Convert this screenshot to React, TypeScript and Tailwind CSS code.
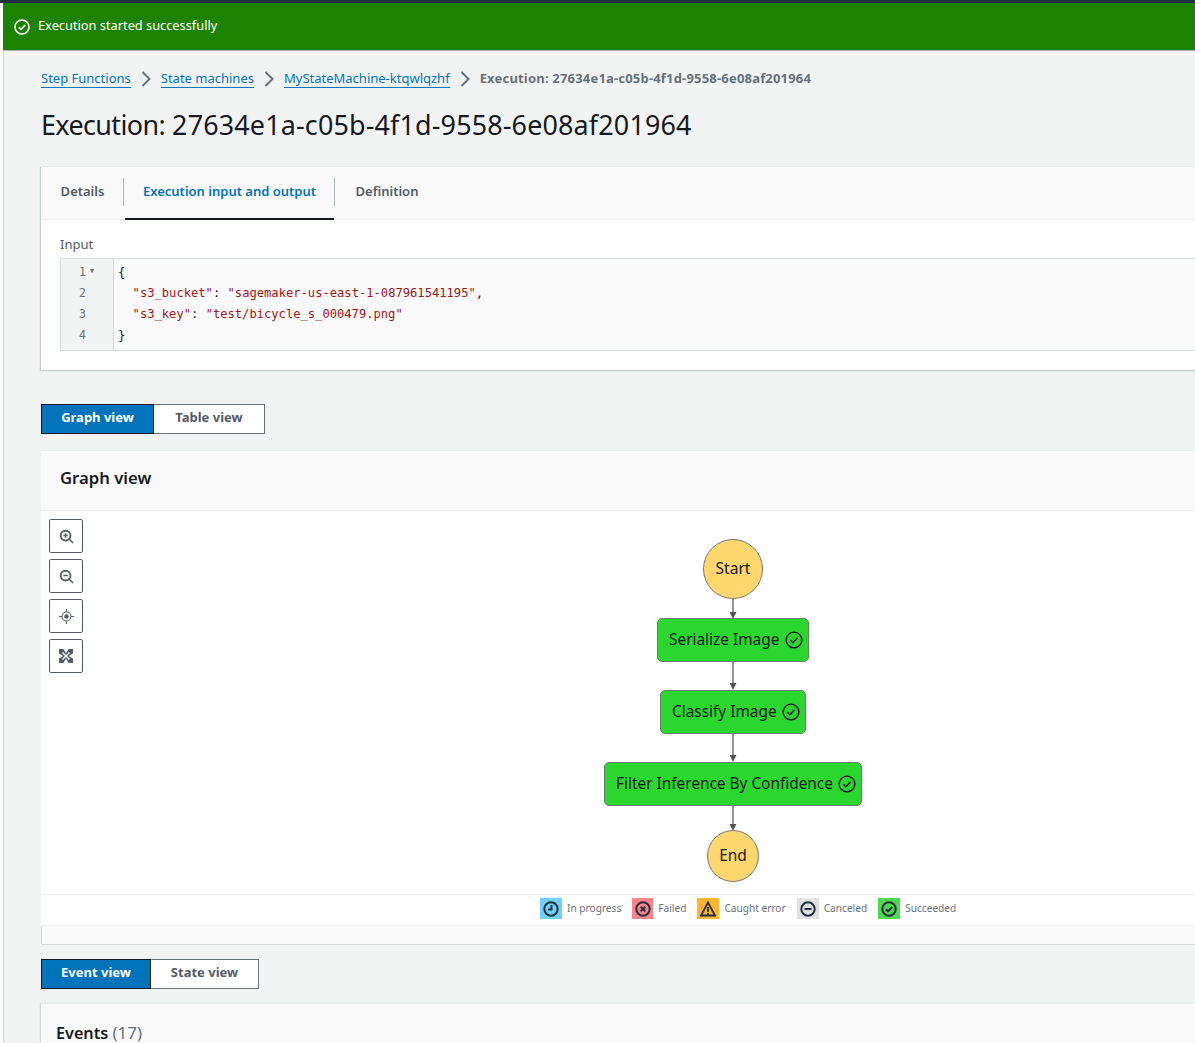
import type { ReactNode } from 'react';

const font = { fontFamily: '"Noto Sans", sans-serif' };

function CheckCircle({ className, strokeWidth = 1.3 }: { className: string; strokeWidth?: number }) {
  return (
    <svg viewBox="0 0 16 16" fill="none" stroke="currentColor" strokeWidth={strokeWidth} className={className}>
      <circle cx="8" cy="8" r="7" />
      <path d="M4.8 8.2l2.2 2.2 4.2-4.4" />
    </svg>
  );
}

function Chevron() {
  return (
    <svg viewBox="0 0 12 16" fill="none" stroke="#687078" strokeWidth="2" className="w-[12px] h-[16px] mx-[9px]">
      <path d="M2.5 1l7 7-7 7" />
    </svg>
  );
}

function Crumb({ label }: { label: string }) {
  return <a className="text-[13px] leading-[17px] text-[#0073bb] border-b border-[#0073bb]">{label}</a>;
}

function Toggle({ on, off, onWidth, offWidth }: { on: string; off: string; onWidth: string; offWidth: string }) {
  return (
    <div className="flex h-[30px] text-[13px] font-bold">
      <div className={`${onWidth} flex items-center justify-center pb-[2px] bg-[#0073bb] border border-[#16191f] text-white`}>{on}</div>
      <div className={`${offWidth} flex items-center justify-center pb-[2px] bg-white border border-l-0 border-[#687078] text-[#545b64]`}>{off}</div>
    </div>
  );
}

function ToolButton({ children }: { children: ReactNode }) {
  return (
    <div className="w-[34px] h-[34px] flex items-center justify-center bg-white border border-[#545b64] rounded-[2px] text-[#545b64]">
      {children}
    </div>
  );
}

function Arrow({ top, height }: { top: number; height: number }) {
  return (
    <svg className="absolute left-[686px]" style={{ top, height }} width="12" viewBox={`0 0 12 ${height}`}>
      <path d={`M6 0V${height - 6}`} stroke="#666" strokeWidth="1.4" />
      <path d={`M2.5 ${height - 7}h7L6 ${height}z`} fill="#555" />
    </svg>
  );
}

function TaskNode({ label, left, top, width }: { label: string; left: string; top: string; width: string }) {
  return (
    <div className={`absolute ${left} ${top} ${width} h-[44px] flex items-center justify-between pl-[11px] pr-[5px] bg-[#2bd62f] border border-[#6b7b6b] rounded-[5px] text-[15.4px] text-[#16191f]`}>
      <span className="whitespace-nowrap">{label}</span>
      <CheckCircle className="w-[18px] h-[18px] shrink-0 mb-[1px]" />
    </div>
  );
}

function Legend({ bg, width, label, children }: { bg: string; width: string; label: string; children: ReactNode }) {
  return (
    <div className="flex items-center gap-[5px]">
      <div className={`${width} h-[21px] flex items-center justify-center ${bg} text-[#232f3e]`}>{children}</div>
      <span className="text-[10.15px] text-[#687078]">{label}</span>
    </div>
  );
}

export default function App() {
  return (
    <div style={font} className="w-[1195px] h-[1043px] overflow-hidden bg-[#f2f3f3] text-[#16191f]">
      <div className="h-[3px] bg-[#232f3e]" />
      <div className="flex h-[1040px]">
        <div className="w-[3px] shrink-0 bg-white" />
        <div className="w-[1192px] shrink-0">
          <div className="h-[48px] flex items-center gap-[8px] pl-[11px] bg-[#1d8102] text-white text-[12.8px] border-b border-[#aab7b8]">
            <CheckCircle className="w-[16px] h-[16px]" strokeWidth={1.6} />
            <span className="mb-[1px]">Execution started successfully</span>
          </div>

          <div className="pl-[37px] w-[1540px] h-[992px] border-l border-[#d5dbdb]">
            <div className="flex items-center h-[17px] pt-[19px] box-content">
              <Crumb label="Step Functions" />
              <Chevron />
              <Crumb label="State machines" />
              <Chevron />
              <Crumb label="MyStateMachine-ktqwlqzhf" />
              <Chevron />
              <span className="text-[13px] font-bold tracking-[0.19px] text-[#687078]">Execution: 27634e1a-c05b-4f1d-9558-6e08af201964</span>
            </div>
            <h1 className="text-[26.9px] leading-[36px] mt-[20px] font-normal">
              <span className="tracking-[-0.6px]">Execution:</span> <span className="tracking-[0.17px]">27634e1a-c05b-4f1d-9558-6e08af201964</span>
            </h1>

            <section className="mt-[23px] h-[204px] bg-white border-t border-[#eaeded] shadow-[-1px_1px_1px_#c4cccc]">
              <div className="h-[53px] flex bg-[#fafafa] border-b border-[#eaeded] text-[13px] font-semibold text-[#545b64]">
                <div className="w-[82px] flex items-center justify-center pl-[1px] pb-[2px]">Details</div>
                <div className="w-px h-[28px] mt-[11px] bg-[#aab7b8]" />
                <div className="w-[209px] ml-[1px] flex items-center justify-center pb-[1px] text-[#0073bb] border-b-2 border-[#16191f] h-[53px]">Execution input and output</div>
                <div className="w-px h-[28px] mt-[11px] bg-[#aab7b8]" />
                <div className="w-[104px] flex items-center justify-center pb-[2px]">Definition</div>
              </div>
              <div className="pl-[19px] pt-[15px]">
                <div className="text-[13px] leading-[18px] text-[#545b64]">Input</div>
                <div className="mt-[5px] h-[93px] flex bg-[#fafafa] border border-[#d5dbdb] text-[11.5px] leading-[21px]" style={{ fontFamily: '"DejaVu Sans Mono", monospace' }}>
                  <div className="w-[53px] bg-[#f2f3f3] border-r border-[#d5dbdb] text-[#687078] pl-[18px] pt-[3px]">
                    <div className="relative">1<span className="absolute left-[11px] top-[-1px] text-[7px]">▼</span></div>
                    <div>2</div>
                    <div>3</div>
                    <div>4</div>
                  </div>
                  <div className="pl-[4px] pt-[3px] text-[12.13px] whitespace-pre text-[#16191f]">
                    <div>{'{'}</div>
                    <div>  <span className="text-[#a31515]">"s3_bucket"</span>: <span className="text-[#a31515]">"sagemaker-us-east-1-087961541195"</span>,</div>
                    <div>  <span className="text-[#a31515]">"s3_key"</span>: <span className="text-[#a31515]">"test/bicycle_s_000479.png"</span></div>
                    <div>{'}'}</div>
                  </div>
                </div>
              </div>
            </section>

            <div className="mt-[34px]">
              <Toggle on="Graph view" off="Table view" onWidth="w-[113px]" offWidth="w-[111px]" />
            </div>

            <section className="mt-[16px]">
              <div className="h-[61px] flex items-center pl-[19px] pb-[6px] bg-[#fafafa] border-t border-b border-[#eaeded] text-[16.7px] font-semibold">Graph view</div>
              <div className="relative h-[383px] bg-white">
                <div className="absolute left-[8px] top-[8px] flex flex-col gap-[6px]">
                  <ToolButton>
                    <svg viewBox="0 0 16 16" fill="none" stroke="currentColor" strokeWidth="2" className="w-[15px] h-[15px]">
                      <circle cx="7" cy="7" r="5.2" /><path d="M11 11l4 4M4.6 7h4.8M7 4.6v4.8" strokeWidth="1.6" />
                    </svg>
                  </ToolButton>
                  <ToolButton>
                    <svg viewBox="0 0 16 16" fill="none" stroke="currentColor" strokeWidth="2" className="w-[15px] h-[15px]">
                      <circle cx="7" cy="7" r="5.2" /><path d="M11 11l4 4M4.6 7h4.8" strokeWidth="1.6" />
                    </svg>
                  </ToolButton>
                  <ToolButton>
                    <svg viewBox="0 0 16 16" fill="none" stroke="currentColor" strokeWidth="1.2" className="w-[15px] h-[15px]">
                      <circle cx="8" cy="8" r="4.8" /><circle cx="8" cy="8" r="2.4" fill="currentColor" stroke="none" /><path d="M8 0v3M8 13v3M0 8h3M13 8h3" />
                    </svg>
                  </ToolButton>
                  <ToolButton>
                    <svg viewBox="0 0 14 14" className="w-[14px] h-[14px]">
                      <rect width="14" height="14" fill="currentColor" />
                      <path d="M3.5 3.5l7 7M10.5 3.5l-7 7" stroke="#fff" strokeWidth="1.4" />
                      <path d="M7 4.2L4.4 0h5.2zM7 9.8L4.4 14h5.2zM4.2 7L0 4.4v5.2zM9.8 7L14 4.4v5.2z" fill="#fff" />
                    </svg>
                  </ToolButton>
                </div>

                <div className="absolute left-[662px] top-[28px] w-[60px] h-[60px] rounded-full bg-[#ffd76e] border border-[#7a7a7a] flex items-center justify-center pb-[1px] text-[15.5px]">Start</div>
                <Arrow top={88} height={20} />
                <TaskNode label="Serialize Image" left="left-[616px]" top="top-[107px]" width="w-[152px]" />
                <Arrow top={151} height={28} />
                <TaskNode label="Classify Image" left="left-[619px]" top="top-[179px]" width="w-[146px]" />
                <Arrow top={223} height={28} />
                <TaskNode label="Filter Inference By Confidence" left="left-[563px]" top="top-[251px]" width="w-[258px]" />
                <Arrow top={295} height={25} />
                <div className="absolute left-[666px] top-[319px] w-[52px] h-[52px] rounded-full bg-[#ffd76e] border border-[#7a7a7a] flex items-center justify-center pb-[1px] text-[15.5px]">End</div>
              </div>
              <div className="h-[32px] flex items-center pl-[499px] pb-[3px] gap-[11px] bg-white border-t border-b border-[#eaeded]">
                <Legend bg="bg-[#6fd2f5]" width="w-[22px]" label="In progress">
                  <svg viewBox="0 0 16 16" fill="none" stroke="currentColor" strokeWidth="2" className="w-[16px] h-[16px]"><circle cx="8" cy="8" r="6.7" /><path d="M8.5 4v4.5H5" /></svg>
                </Legend>
                <Legend bg="bg-[#f9858a]" width="w-[21px]" label="Failed">
                  <svg viewBox="0 0 16 16" fill="none" stroke="currentColor" strokeWidth="2" className="w-[16px] h-[16px]"><circle cx="8" cy="8" r="6.7" /><path d="M5.7 5.7l4.6 4.6M10.3 5.7l-4.6 4.6" /></svg>
                </Legend>
                <Legend bg="bg-[#ffb52e]" width="w-[22px]" label="Caught error">
                  <svg viewBox="0 0 16 16" fill="none" stroke="currentColor" strokeWidth="1.8" className="w-[16px] h-[16px]"><path d="M8 1.5L1 14.5h14zM8 6v5M8 12v1.4" /></svg>
                </Legend>
                <Legend bg="bg-[#e1e1e1]" width="w-[22px]" label="Canceled">
                  <svg viewBox="0 0 16 16" fill="none" stroke="currentColor" strokeWidth="2" className="w-[16px] h-[16px]"><circle cx="8" cy="8" r="6.7" /><path d="M4.5 8h7" /></svg>
                </Legend>
                <Legend bg="bg-[#4fd94f]" width="w-[22px]" label="Succeeded">
                  <svg viewBox="0 0 16 16" fill="none" stroke="currentColor" strokeWidth="2" className="w-[16px] h-[16px]"><circle cx="8" cy="8" r="6.7" /><path d="M4.8 8.2l2.2 2.2 4.2-4.4" /></svg>
                </Legend>
              </div>
              <div className="h-[19px] bg-[#fafafa] border-l border-b border-[#d5dbdb]" />
            </section>

            <div className="mt-[14px]">
              <Toggle on="Event view" off="State view" onWidth="w-[110px]" offWidth="w-[108px]" />
            </div>

            <section className="mt-[14px] h-[60px] bg-[#fafafa] border-t border-[#eaeded] shadow-[-1px_0_1px_#d5dbdb] pl-[15px] pt-[17px] text-[16.2px] font-semibold leading-[24px]">
              Events <span className="font-normal text-[17px] text-[#687078]">(17)</span>
            </section>
          </div>
        </div>
      </div>
    </div>
  );
}
